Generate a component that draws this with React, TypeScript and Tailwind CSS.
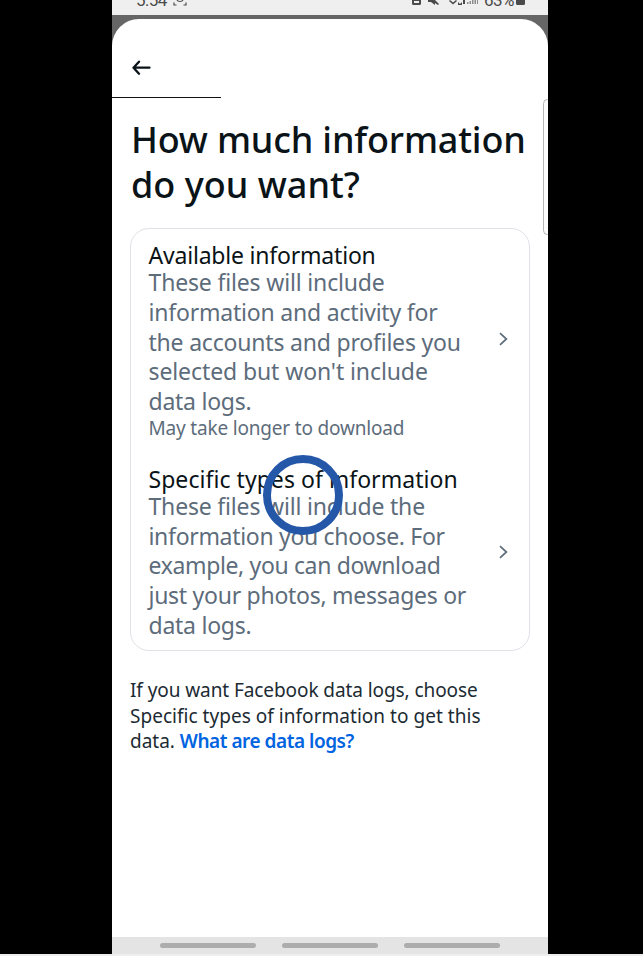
import type { ReactNode } from 'react';

type OptionProps = {
    title: string;
    lines: { text: string; tracking: string }[];
    titleTracking: string;
    note?: string;
};

const available = [
    { text: 'These files will include', tracking: 'tracking-[-0.16px]' },
    { text: 'information and activity for', tracking: 'tracking-[-0.2px]' },
    { text: 'the accounts and profiles you', tracking: 'tracking-[-0.2px]' },
    { text: "selected but won't include", tracking: 'tracking-[-0.1px]' },
    { text: 'data logs.', tracking: 'tracking-[-0.25px]' },
];

const specific = [
    { text: 'These files will include the', tracking: 'tracking-[-0.18px]' },
    { text: 'information you choose. For', tracking: 'tracking-[-0.31px]' },
    { text: 'example, you can download', tracking: 'tracking-[-0.36px]' },
    { text: 'just your photos, messages or', tracking: 'tracking-[-0.27px]' },
    { text: 'data logs.', tracking: 'tracking-[-0.25px]' },
];

function Line({ className, children }: { className: string; children: ReactNode }) {
    return <span className={`block w-max whitespace-nowrap ${className}`}>{children}</span>;
}

function Option({ title, lines, titleTracking, note }: OptionProps) {
    return (
        <button className="flex w-full items-center justify-between text-left">
            <div>
                <h2 className="text-[23px] leading-[26px] text-[#0a1317]">
                    <Line className={titleTracking}>{title}</Line>
                </h2>
                <p className="text-[23px] leading-[29.75px] text-[#5d6c7b]">
                    {lines.map((line) => (
                        <Line key={line.text} className={line.tracking}>{line.text}</Line>
                    ))}
                </p>
                {note && (
                    <p className="text-[19px] leading-[22px] text-[#5d6c7b]">
                        <Line className="tracking-[-0.18px]">{note}</Line>
                    </p>
                )}
            </div>
            <svg className="mb-0.5 mr-[21.5px] shrink-0" width="9" height="14" viewBox="0 0 9 14" fill="none" stroke="#5d6c7b" strokeWidth="1.7">
                <path d="M1 1.200 7.400 7 1 12.800" />
            </svg>
        </button>
    );
}

function StatusBar() {
    return (
        <div className="flex h-[15px] shrink-0 justify-between overflow-hidden bg-[#efefef] pl-6 pr-[23px] font-['Roboto',sans-serif] text-[17px] text-[#4a4a4a]">
            <div className="flex gap-1.5">
                <span className="-mt-[11px] leading-[22px] tracking-[-0.5px]">5:54</span>
                <svg width="14" height="6" viewBox="0 0 14 6" fill="none" stroke="currentColor" strokeWidth="1.2">
                    <path d="M1 2.500V5h2.500M10.500 5H13V2.500M4 0c1 2 5 2 6 0" />
                </svg>
            </div>
            <div className="flex">
                <svg width="68" height="6" viewBox="0 0 68 6" fill="currentColor">
                    <path fillRule="evenodd" d="M0 0h9v3.500q0 1.500-1.500 1.500h-6Q0 5 0 3.500zM2 1v2h5V1z" />
                    <path d="M16 0h7l4 4-1 1-3-2v2l-4-3h-3z" />
                    <path d="M38 0l3 2.500L44 0l1 1-4 3.500L37 1zM46 2l2 2 2-2v3h-4zM51 0h2v4h-2z" />
                    <path opacity="0.6" d="M55 2h1.500v2H55zM57.500 1H59v3h-1.500zM60 0h1.500v4H60zM62.500 0H64v4h-1.500zM65 0h1v4h-1z" />
                </svg>
                <span className="-mt-[11px] ml-1 leading-[22px] tracking-[-0.5px]">63%</span>
                <svg className="ml-0.5" width="9" height="6" viewBox="0 0 9 6" fill="currentColor">
                    <path d="M0 0h9v3.500Q9 5 7.500 5h-6Q0 5 0 3.500z" />
                </svg>
            </div>
        </div>
    );
}

export default function App() {
    return (
        <div className="flex h-[956px] w-[643px] flex-col overflow-hidden bg-[#eeeeee] font-['Noto_Sans',sans-serif]">
            <div className="flex h-[954px] shrink-0 bg-black pl-28">
                <div className="relative flex w-[436px] flex-col overflow-hidden bg-[#666666]">
                    <StatusBar />
                    <main className="mt-1 flex flex-1 flex-col rounded-t-[27px] bg-white">
                        <div className="pl-5 pt-10">
                            <svg width="20" height="17" viewBox="0 0 20 17" fill="none" stroke="#0a1317" strokeWidth="2.3" strokeLinecap="round" strokeLinejoin="round">
                                <path d="M7 2.700 1.500 8.700l5.500 6M1.500 8.700H17.500" />
                            </svg>
                        </div>
                        <div className="mt-[21px] h-px w-[109px] bg-[#111111]" />

                        <h1 className="ml-[19px] mt-[19px] text-[36px] font-medium leading-[45px] text-[#0a1317]">
                            <Line className="tracking-[-0.17px]">How much information</Line>
                            <Line className="tracking-[0.02px]">do you want?</Line>
                        </h1>

                        <section className="ml-[18px] mt-[21px] flex h-[423px] w-[400px] flex-col gap-[27px] rounded-[19px] border border-[#dee1e6] pl-[17.5px] pt-[13px]">
                            <Option title="Available information" titleTracking="tracking-[-0.2px]" lines={available} note="May take longer to download" />
                            <Option title="Specific types of information" titleTracking="tracking-[0.05px]" lines={specific} />
                        </section>

                        <p className="ml-[18px] mt-[27px] text-[19px] leading-[25.5px] text-[#1c2b33]">
                            <Line className="tracking-[-0.08px]">If you want Facebook data logs, choose</Line>
                            <Line className="tracking-[0.03px]">Specific types of information to get this</Line>
                            <Line className="tracking-[-0.02px]">
                                data. <a className="font-semibold tracking-[-0.47px] text-[#0064e0]">What are data logs?</a>
                            </Line>
                        </p>
                    </main>

                    <nav className="flex h-[17px] shrink-0 items-center justify-center gap-[26px] bg-[#e4e4e4]">
                        <div className="h-[5px] w-24 rounded-full bg-[#adadad]" />
                        <div className="h-[5px] w-24 rounded-full bg-[#adadad]" />
                        <div className="h-[5px] w-24 rounded-full bg-[#adadad]" />
                    </nav>

                    <div className="absolute -right-1 top-[99px] h-[136px] w-[9px] rounded-[5px] border border-[#b5b5b5] bg-[#fcfcfc]" />
                    <div className="absolute left-[151px] top-[455px] size-20 rounded-full border-8 border-[#2457a8]" />
                </div>
            </div>
        </div>
    );
}
